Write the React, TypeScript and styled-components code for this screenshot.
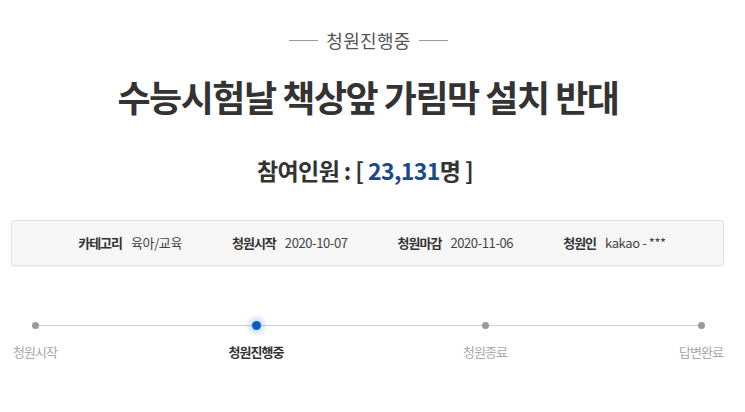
import styled, { createGlobalStyle } from "styled-components";

const GlobalStyle = createGlobalStyle`
	html, body {
		margin: 0;
		padding: 0;
		background: #ffffff;
	}
	body {
		font-family: "Noto Sans CJK KR", "Noto Sans", sans-serif;
	}
`

const Page = styled.div`
	width: 745px;
	height: 412px;
	padding-top: 30px;
	box-sizing: border-box;
	overflow: hidden;
	color: #333;
`

const StatusRow = styled.div`
	display: flex;
	align-items: center;
	justify-content: center;
	gap: 8px;
	height: 20px;
	padding-right: 8px;
`

const StatusLine = styled.span`
	width: 29px;
	height: 1px;
	background: #9a9a9a;
`

const StatusText = styled.span`
	font-size: 18px;
	line-height: 20px;
	color: #555;
	letter-spacing: 0.3px;
`

const Title = styled.h1`
	margin: 26px 0 0;
	padding-right: 9px;
	text-align: center;
	font-size: 36px;
	line-height: 40px;
	font-weight: 700;
	letter-spacing: -1.5px;
	color: #333;
`

const Count = styled.div`
	margin-top: 39px;
	padding-right: 15px;
	text-align: center;
	font-size: 23px;
	line-height: 30px;
	font-weight: 700;
	letter-spacing: -0.6px;
	color: #333;
`

const CountNumber = styled.span`
	color: #1b4a8a;
`

const InfoBox = styled.div`
	margin: 35px 21px 0 11px;
	height: 46px;
	box-sizing: border-box;
	display: flex;
	align-items: center;
	justify-content: center;
	gap: 50px;
	background: #f6f6f6;
	border: 1px solid #e2e2e2;
	border-radius: 3px;
	box-shadow: 0 1px 1px rgba(0, 0, 0, 0.05);
	padding-left: 9px;
`

const InfoItem = styled.div`
	display: flex;
	align-items: center;
	gap: 9px;
	font-size: 13px;
	line-height: 18px;
`

const InfoLabel = styled.span`
	font-weight: 700;
	color: #333;
	letter-spacing: -1px;
`

const InfoValue = styled.span`
	color: #444;
	letter-spacing: -0.4px;
`

const Track = styled.div`
	position: relative;
	margin-top: 52px;
	width: 736px;
	display: grid;
	grid-template-columns: 70px 151px 70px 159px 70px 146px 70px;

	&::before {
		content: "";
		position: absolute;
		left: 35px;
		right: 35px;
		top: 7px;
		height: 1px;
		background: #cfcfcf;
	}
`

const Step = styled.div`
	position: relative;
	width: 70px;
	display: flex;
	flex-direction: column;
	align-items: center;
	gap: 11px;

	&:nth-child(2) { grid-column: 3; }
	&:nth-child(3) { grid-column: 5; }
	&:nth-child(4) { grid-column: 7; }
`

const DotSlot = styled.div`
	height: 14px;
	display: flex;
	align-items: center;
	justify-content: center;
`

const Dot = styled.span<{ $active?: boolean }>`
	display: block;
	width: ${({ $active }) => ($active ? "9px" : "7px")};
	height: ${({ $active }) => ($active ? "9px" : "7px")};
	border-radius: 50%;
	background: ${({ $active }) => ($active ? "#0b5cc0" : "#9a9a9a")};
	box-shadow: ${({ $active }) =>
		$active ? "0 0 4px 4px rgba(40, 130, 240, 0.22)" : "none"};
`

const StepLabel = styled.span<{ $active?: boolean }>`
	font-size: 13px;
	line-height: 18px;
	white-space: nowrap;
	letter-spacing: -1px;
	font-weight: ${({ $active }) => ($active ? 700 : 400)};
	color: ${({ $active }) => ($active ? "#333" : "#a8a8a8")};
`

const info = [
	{ label: "카테고리", value: "육아/교육" },
	{ label: "청원시작", value: "2020-10-07" },
	{ label: "청원마감", value: "2020-11-06" },
	{ label: "청원인", value: "kakao - ***" },
]

const steps = [
	{ label: "청원시작" },
	{ label: "청원진행중", active: true },
	{ label: "청원종료" },
	{ label: "답변완료" },
]

export default function App() {
	return (
		<>
			<GlobalStyle />
			<Page>
				<StatusRow>
					<StatusLine />
					<StatusText>청원진행중</StatusText>
					<StatusLine />
				</StatusRow>
				<Title>수능시험날 책상앞 가림막 설치 반대</Title>
				<Count>
					참여인원 : [ <CountNumber>23,131</CountNumber>명 ]
				</Count>
				<InfoBox>
					{info.map((item) => (
						<InfoItem key={item.label}>
							<InfoLabel>{item.label}</InfoLabel>
							<InfoValue>{item.value}</InfoValue>
						</InfoItem>
					))}
				</InfoBox>
				<Track>
					{steps.map((s) => (
						<Step key={s.label}>
							<DotSlot>
								<Dot $active={s.active} />
							</DotSlot>
							<StepLabel $active={s.active}>{s.label}</StepLabel>
						</Step>
					))}
				</Track>
			</Page>
		</>
	)
}
